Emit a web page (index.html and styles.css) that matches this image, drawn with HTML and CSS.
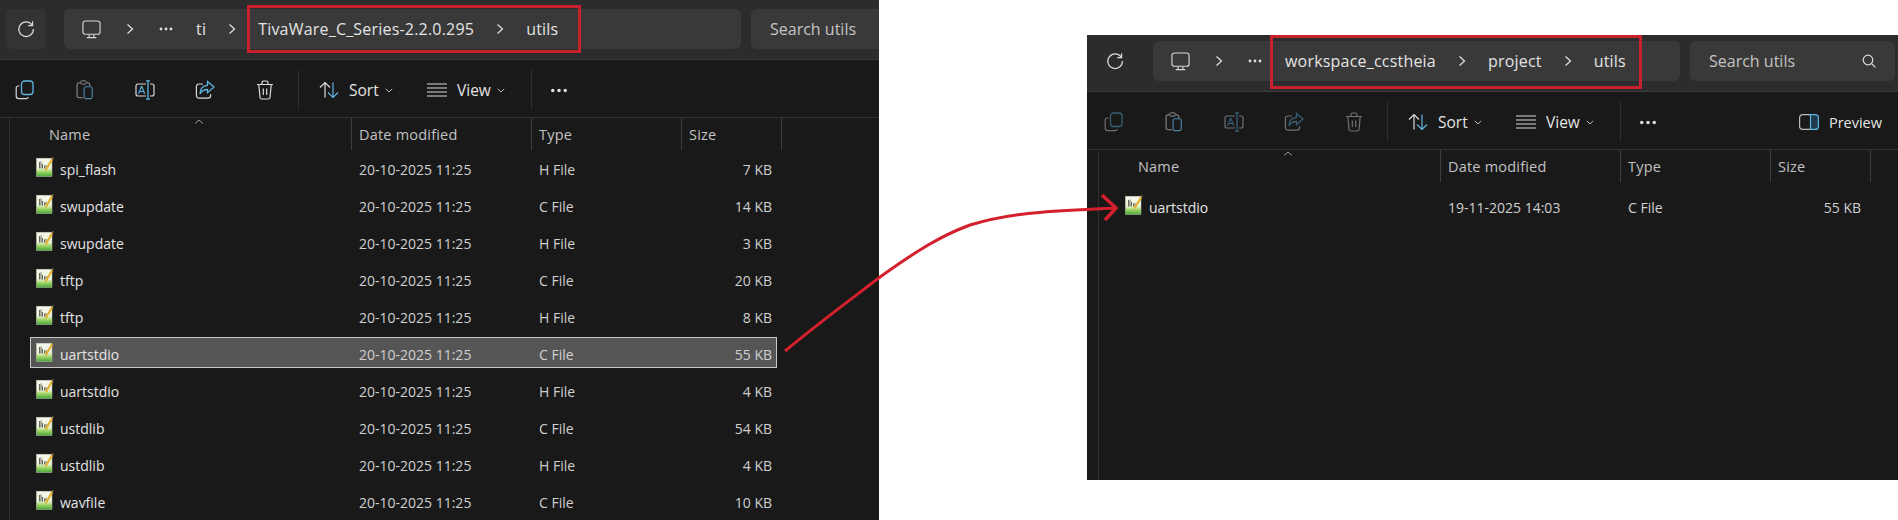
FILE: index.html
```html
<!DOCTYPE html>
<html lang="en">
<head>
    <meta charset="UTF-8">
    <title>File Explorer comparison</title>
    <link rel="stylesheet" href="styles.css">
</head>
<body>
    <svg class="defs" width="0" height="0">
        <defs>
            <linearGradient id="pagefill" x1="0" y1="0" x2="0" y2="1">
                <stop offset="0" stop-color="#f8f8ee"/>
                <stop offset="0.55" stop-color="#eaf2d8"/>
                <stop offset="0.72" stop-color="#a5d96c"/>
                <stop offset="1" stop-color="#45a535"/>
            </linearGradient>
            <symbol id="i-file" viewBox="0 0 18 20">
                <rect x="0.4" y="1.2" width="15.6" height="18.4" fill="url(#pagefill)" stroke="#b9bfae" stroke-width="0.5"/>
                <path d="M3.500 5v6.500M5 4.500v7M6.500 7v4.500M8.500 8.500v3M10 8v3" stroke="#55584c" stroke-width="0.900" fill="none"/>
                <path d="M9.500 13.500L16.300 2" stroke="#e3b032" stroke-width="2.200" fill="none"/>
                <path d="M16 2.500L17.400 0" stroke="#7a6a40" stroke-width="1.200" fill="none"/>
            </symbol>
            <symbol id="i-refresh" viewBox="0 0 20 20">
                <path d="M16.200 6.200A7.300 7.300 0 1 0 17.400 10" stroke="#d8d8d8" stroke-width="1.200" fill="none"/>
                <path d="M16.600 2.200v4.400h-4.400" stroke="#d8d8d8" stroke-width="1.200" fill="none"/>
            </symbol>
            <symbol id="i-monitor" viewBox="0 0 20 20">
                <rect x="1" y="1" width="18" height="14" rx="2.500" stroke="#d6d6d6" stroke-width="1.200" fill="none"/>
                <path d="M7.500 15.500v2.500M12.500 15.500v2.500M5 18.500h10" stroke="#d6d6d6" stroke-width="1.200" fill="none"/>
            </symbol>
            <symbol id="i-chev" viewBox="0 0 10 12">
                <path d="M2.500 1.500L7.500 6L2.500 10.500" stroke="#dcdcdc" stroke-width="1.300" fill="none"/>
            </symbol>
            <symbol id="i-dots" viewBox="0 0 14 4">
                <circle cx="2" cy="2" r="1.400" fill="#e0e0e0"/>
                <circle cx="7" cy="2" r="1.400" fill="#e0e0e0"/>
                <circle cx="12" cy="2" r="1.400" fill="#e0e0e0"/>
            </symbol>
            <symbol id="i-copy" viewBox="0 0 20 20">
                <path d="M4.500 6H3.200A2 2 0 0 0 1.200 8v8a2.600 2.600 0 0 0 2.600 2.600h7.500a2 2 0 0 0 2-1.600" stroke="#d8d8d8" stroke-width="1.200" fill="none"/>
                <rect x="6.500" y="1" width="11.500" height="13.500" rx="3" stroke="#5fb4e0" stroke-width="1.300" fill="none"/>
            </symbol>
            <symbol id="i-paste" viewBox="0 0 20 22">
                <path d="M8 19.500H3.500a2.200 2.200 0 0 1-2.200-2.200V5.200A2.200 2.200 0 0 1 3.500 3H13a2.200 2.200 0 0 1 2.200 2.200v1.300" stroke="#8c8c8c" stroke-width="1.200" fill="none"/>
                <rect x="5" y="1" width="6.500" height="3.500" rx="1.400" fill="#191919" stroke="#8c8c8c" stroke-width="1.100"/>
                <rect x="9" y="7.500" width="9" height="13" rx="2" stroke="#4d87a8" stroke-width="1.200" fill="none"/>
            </symbol>
            <symbol id="i-rename" viewBox="0 0 20 20">
                <path d="M11 4H3a2 2 0 0 0-2 2v8a2 2 0 0 0 2 2h8M15 4h2a2 2 0 0 1 2 2v8a2 2 0 0 1-2 2h-2" stroke="#d8d8d8" stroke-width="1.200" fill="none"/>
                <text x="6.600" y="14" text-anchor="middle" class="icon-letter">A</text>
                <path d="M13 .800v18.400M11 .800h4M11 19.200h4" stroke="#5fb4e0" stroke-width="1.300" fill="none"/>
            </symbol>
            <symbol id="i-share" viewBox="0 0 20 20">
                <path d="M8 4H4a2.600 2.600 0 0 0-2.600 2.600v9A2.600 2.600 0 0 0 4 18.200h9a2.600 2.600 0 0 0 2.600-2.600v-1.400" stroke="#d8d8d8" stroke-width="1.200" fill="none"/>
                <path d="M12.500 1.500l6.500 5.600-6.500 5.600V9.500C9 9.500 6.500 11 5 14c0-5 3-8.300 7.500-8.700z" stroke="#5fb4e0" stroke-width="1.300" fill="none"/>
            </symbol>
            <symbol id="i-trash" viewBox="0 0 18 20">
                <path d="M1 4.500h16M2.800 4.500l1.200 13a1.800 1.800 0 0 0 1.800 1.500h6.400a1.800 1.800 0 0 0 1.800-1.500l1.200-13M6 4.500V2.600A1.600 1.600 0 0 1 7.600 1h2.800A1.600 1.600 0 0 1 12 2.600v1.900M7.300 8.500v6.500M10.700 8.500v6.500" stroke="#dcdcdc" stroke-width="1.200" fill="none"/>
            </symbol>
            <symbol id="i-sort" viewBox="0 0 20 18">
                <path d="M6 16.500V1.800M1 6.500l5-5 5 5" stroke="#dcdcdc" stroke-width="1.200" fill="none"/>
                <path d="M14 1.500v14.700M9 11.500l5 5 5-5" stroke="#5fb4e0" stroke-width="1.200" fill="none"/>
            </symbol>
            <symbol id="i-view" viewBox="0 0 20 14">
                <path d="M0 1h20M0 5h20M0 9h20M0 13h20" stroke="#dcdcdc" stroke-width="1.200" fill="none"/>
            </symbol>
            <symbol id="i-down" viewBox="0 0 8 5">
                <path d="M.8.800L4 4l3.200-3.200" stroke="#b8b8b8" stroke-width="1" fill="none"/>
            </symbol>
            <symbol id="i-preview" viewBox="0 0 20 16">
                <path d="M11.500 .600H3.600a3 3 0 0 0-3 3v8.800a3 3 0 0 0 3 3h7.900" stroke="#bdbdbd" stroke-width="1.200" fill="none"/>
                <path d="M11.500 .600h4.900a3 3 0 0 1 3 3v8.800a3 3 0 0 1-3 3h-4.900z" fill="#1f3a4c" stroke="#5fb4e0" stroke-width="1.200"/>
            </symbol>
            <symbol id="i-search" viewBox="0 0 14 14">
                <circle cx="6" cy="6" r="4.800" stroke="#dcdcdc" stroke-width="1.200" fill="none"/>
                <path d="M9.500 9.500L13.400 13.400" stroke="#dcdcdc" stroke-width="1.200" fill="none"/>
            </symbol>
        </defs>
    </svg>

    <div class="stage">
        <section class="win win-source">
            <div class="topbar">
                <div class="refresh"><svg class="ico-20"><use href="#i-refresh"/></svg></div>
                <div class="address">
                    <svg class="ico-monitor"><use href="#i-monitor"/></svg>
                    <svg class="chev chev-first"><use href="#i-chev"/></svg>
                    <svg class="more"><use href="#i-dots"/></svg>
                    <span class="crumb crumb-first">ti</span>
                    <svg class="chev"><use href="#i-chev"/></svg>
                    <span class="crumb">TivaWare_C_Series-2.2.0.295</span>
                    <svg class="chev"><use href="#i-chev"/></svg>
                    <span class="crumb">utils</span>
                </div>
                <div class="search">
                    <span>Search utils</span>
                    <svg class="ico-search"><use href="#i-search"/></svg>
                </div>
            </div>
            <div class="toolbar">
                <div class="tool"><svg class="ico-20"><use href="#i-copy"/></svg></div>
                <div class="tool"><svg class="ico-20"><use href="#i-paste"/></svg></div>
                <div class="tool"><svg class="ico-20"><use href="#i-rename"/></svg></div>
                <div class="tool"><svg class="ico-20"><use href="#i-share"/></svg></div>
                <div class="tool"><svg class="ico-trash"><use href="#i-trash"/></svg></div>
                <div class="sep"></div>
                <div class="menu menu-sort"><svg class="ico-sort"><use href="#i-sort"/></svg><span>Sort</span><svg class="ico-down"><use href="#i-down"/></svg></div>
                <div class="menu menu-view"><svg class="ico-view"><use href="#i-view"/></svg><span>View</span><svg class="ico-down"><use href="#i-down"/></svg></div>
                <div class="sep"></div>
                <svg class="ico-more"><use href="#i-dots"/></svg>
            </div>
            <div class="list">
                <div class="cols head">
                    <div class="hcell hname">Name<svg class="sort-caret" viewBox="0 0 10 5"><path d="M1 4.500L5 1l4 3.500" stroke="#a0a0a0" fill="none"/></svg></div>
                    <div class="hcell">Date modified</div>
                    <div class="hcell">Type</div>
                    <div class="hcell">Size</div>
                </div>
                <div class="rows">
                    <div class="cols row"><div class="fname"><svg class="ico-file"><use href="#i-file"/></svg>spi_flash</div><div>20-10-2025 11:25</div><div>H File</div><div class="fsize">7 KB</div></div>
                    <div class="cols row"><div class="fname"><svg class="ico-file"><use href="#i-file"/></svg>swupdate</div><div>20-10-2025 11:25</div><div>C File</div><div class="fsize">14 KB</div></div>
                    <div class="cols row"><div class="fname"><svg class="ico-file"><use href="#i-file"/></svg>swupdate</div><div>20-10-2025 11:25</div><div>H File</div><div class="fsize">3 KB</div></div>
                    <div class="cols row"><div class="fname"><svg class="ico-file"><use href="#i-file"/></svg>tftp</div><div>20-10-2025 11:25</div><div>C File</div><div class="fsize">20 KB</div></div>
                    <div class="cols row"><div class="fname"><svg class="ico-file"><use href="#i-file"/></svg>tftp</div><div>20-10-2025 11:25</div><div>H File</div><div class="fsize">8 KB</div></div>
                    <div class="cols row selected"><div class="fname"><svg class="ico-file"><use href="#i-file"/></svg>uartstdio</div><div>20-10-2025 11:25</div><div>C File</div><div class="fsize">55 KB</div></div>
                    <div class="cols row"><div class="fname"><svg class="ico-file"><use href="#i-file"/></svg>uartstdio</div><div>20-10-2025 11:25</div><div>H File</div><div class="fsize">4 KB</div></div>
                    <div class="cols row"><div class="fname"><svg class="ico-file"><use href="#i-file"/></svg>ustdlib</div><div>20-10-2025 11:25</div><div>C File</div><div class="fsize">54 KB</div></div>
                    <div class="cols row"><div class="fname"><svg class="ico-file"><use href="#i-file"/></svg>ustdlib</div><div>20-10-2025 11:25</div><div>H File</div><div class="fsize">4 KB</div></div>
                    <div class="cols row"><div class="fname"><svg class="ico-file"><use href="#i-file"/></svg>wavfile</div><div>20-10-2025 11:25</div><div>C File</div><div class="fsize">10 KB</div></div>
                </div>
            </div>
        </section>

        <section class="win win-target">
            <div class="topbar">
                <div class="refresh"><svg class="ico-20"><use href="#i-refresh"/></svg></div>
                <div class="address">
                    <svg class="ico-monitor"><use href="#i-monitor"/></svg>
                    <svg class="chev chev-first"><use href="#i-chev"/></svg>
                    <svg class="more"><use href="#i-dots"/></svg>
                    <span class="crumb crumb-first">workspace_ccstheia</span>
                    <svg class="chev"><use href="#i-chev"/></svg>
                    <span class="crumb">project</span>
                    <svg class="chev"><use href="#i-chev"/></svg>
                    <span class="crumb">utils</span>
                </div>
                <div class="search">
                    <span>Search utils</span>
                    <svg class="ico-search"><use href="#i-search"/></svg>
                </div>
            </div>
            <div class="toolbar">
                <div class="tool dim"><svg class="ico-20"><use href="#i-copy"/></svg></div>
                <div class="tool"><svg class="ico-20"><use href="#i-paste"/></svg></div>
                <div class="tool dim"><svg class="ico-20"><use href="#i-rename"/></svg></div>
                <div class="tool dim"><svg class="ico-20"><use href="#i-share"/></svg></div>
                <div class="tool dim"><svg class="ico-trash"><use href="#i-trash"/></svg></div>
                <div class="sep"></div>
                <div class="menu menu-sort"><svg class="ico-sort"><use href="#i-sort"/></svg><span>Sort</span><svg class="ico-down"><use href="#i-down"/></svg></div>
                <div class="menu menu-view"><svg class="ico-view"><use href="#i-view"/></svg><span>View</span><svg class="ico-down"><use href="#i-down"/></svg></div>
                <div class="sep"></div>
                <svg class="ico-more"><use href="#i-dots"/></svg>
                <div class="menu menu-preview"><svg class="ico-preview"><use href="#i-preview"/></svg><span>Preview</span></div>
            </div>
            <div class="list">
                <div class="cols head">
                    <div class="hcell hname">Name<svg class="sort-caret" viewBox="0 0 10 5"><path d="M1 4.500L5 1l4 3.500" stroke="#a0a0a0" fill="none"/></svg></div>
                    <div class="hcell">Date modified</div>
                    <div class="hcell">Type</div>
                    <div class="hcell">Size</div>
                </div>
                <div class="rows">
                    <div class="cols row"><div class="fname"><svg class="ico-file"><use href="#i-file"/></svg>uartstdio</div><div>19-11-2025 14:03</div><div>C File</div><div class="fsize">55 KB</div></div>
                </div>
            </div>
        </section>

        <div class="callout callout-a"></div>
        <div class="callout callout-b"></div>

        <svg class="arrow" viewBox="0 0 1898 520" width="1898" height="520">
            <path d="M785 351C820 322 850 300 880 277C915 252 940 236 970 225C1015 211 1060 211 1116 208" stroke="#d4202c" stroke-width="3" fill="none"/>
            <path d="M1102 195L1116 208L1105 220" stroke="#d4202c" stroke-width="3.500" fill="none"/>
        </svg>
    </div>
</body>
</html>
```

FILE: styles.css
```css
html, body {margin: 0; background: #ffffff;}
body {font-family: "Open Sans", "Noto Sans", sans-serif; font-size: 14px; color: #e4e4e4; overflow: hidden;}
.defs {position: absolute;}
.icon-letter {font-family: "Liberation Sans", sans-serif; font-size: 11px; fill: #5fb4e0;}

.stage {display: flex; gap: 208px; width: 1898px; height: 520px; position: relative; overflow: hidden;}

.win {background: #191919; overflow: hidden; flex: none;}
.win-source {width: 881px; height: 520px; margin-left: -2px;}
.win-target {width: 811px; height: 445px; margin-top: 35px;}

/* address row */
.topbar {display: flex; align-items: flex-start; background: #2c2c2c; border-bottom: 1px solid #3c3c3c; padding: 0 3px 0 8px; gap: 10px; box-sizing: border-box;}
.win-source .topbar {width: 961px; height: 60px; padding-top: 9px;}
.win-target .topbar {height: 57px; padding-top: 6px;}
.refresh {width: 40px; height: 40px; border-radius: 5px; background: #333333; display: flex; align-items: center; justify-content: center; margin-right: 8px;}
.win-target .refresh {background: transparent;}
.address {flex: 1; height: 40px; background: #393939; border-radius: 6px; display: flex; align-items: center; padding-left: 18px; font-size: 16px; letter-spacing: 0.2px;}
.search {width: 205px; height: 40px; background: #393939; border-radius: 6px; display: flex; align-items: center; justify-content: space-between; padding: 0 19px 0 19px; box-sizing: border-box; color: #c4c4c4; font-size: 16px;}
.ico-search {width: 14px; height: 14px;}
.ico-20 {width: 20px; height: 20px;}
.ico-monitor {width: 19px; height: 19px;}
.chev {width: 10px; height: 12px; margin: 0 21px; flex: none;}
.chev-first {margin: 0 24px;}
.more {width: 14px; height: 4px; flex: none;}
.crumb {white-space: nowrap;}
.crumb-first {margin-left: 23px;}

/* command bar */
.toolbar {display: flex; align-items: center; height: 58px; border-bottom: 1px solid #333333; padding: 3px 0 0 5px; box-sizing: border-box; font-size: 15.5px;}
.tool {width: 44px; height: 44px; margin-right: 16px; display: flex; align-items: center; justify-content: center; flex: none;}
.tool.dim {opacity: 0.45;}
.ico-trash {width: 18px; height: 20px;}
.sep {width: 1px; height: 40px; background: #2e2e2e; flex: none; margin-left: -5px;}
.menu {display: flex; align-items: center; flex: none;}
.menu span {margin-left: 10px;}
.ico-sort {width: 20px; height: 18px;}
.ico-view {width: 20px; height: 14px;}
.ico-down {width: 8px; height: 5px; margin-left: 6px;}
.menu-sort {margin-left: 20px; width: 108px;}
.menu-view {width: 109px;}
.ico-more {width: 20px; height: 5px; margin-left: 17px;}
.menu-preview {margin-left: auto; margin-right: 16px; font-size: 14.5px;}
.ico-preview {width: 20px; height: 16px;}

/* details list */
.list {position: relative; margin-left: 11px; border-left: 1px solid #2e2e2e; height: 100%;}
.cols {display: grid; grid-template-columns: 342px 180px 150px 100px;}
.head {height: 32px; align-items: stretch; color: #c2c2c2; font-size: 14.5px; letter-spacing: 0.2px;}
.hcell {border-right: 1px solid #3d3d3d; padding: 1px 0 0 7px; display: flex; align-items: center; position: relative;}
.hname {padding-left: 39px;}
.sort-caret {position: absolute; left: 184px; top: 1px; width: 10px; height: 5px;}
.rows {display: flex; flex-direction: column; gap: 6px; margin-left: 20px; width: 747px;}
.win-source .rows {padding-top: 2px;}
.win-target .rows {padding-top: 8px;}
.row {grid-template-columns: 321px 180px 150px 94px; height: 31px; align-items: center; color: #d0d0d0; box-sizing: border-box; padding-top: 3px; border: 1px solid transparent;}
.row.selected {background: #555555; border-color: #c8c8c8;}
.row > div:nth-child(n+2) {padding-left: 7px;}
.fname {display: flex; align-items: center; color: #e4e4e4;}
.ico-file {width: 18px; height: 20px; margin: 0 6px 0 5px; flex: none; position: relative; top: -2px;}
.row .fsize {text-align: right; padding-right: 4px;}

/* red annotations drawn over the screenshots */
.callout {position: absolute; border: 3px solid #c8202c; box-sizing: border-box; pointer-events: none;}
.callout-a {left: 247px; top: 5px; width: 334px; height: 48px;}
.callout-b {left: 1270px; top: 35px; width: 372px; height: 54px;}
.arrow {position: absolute; left: 0; top: 0; pointer-events: none;}
```
